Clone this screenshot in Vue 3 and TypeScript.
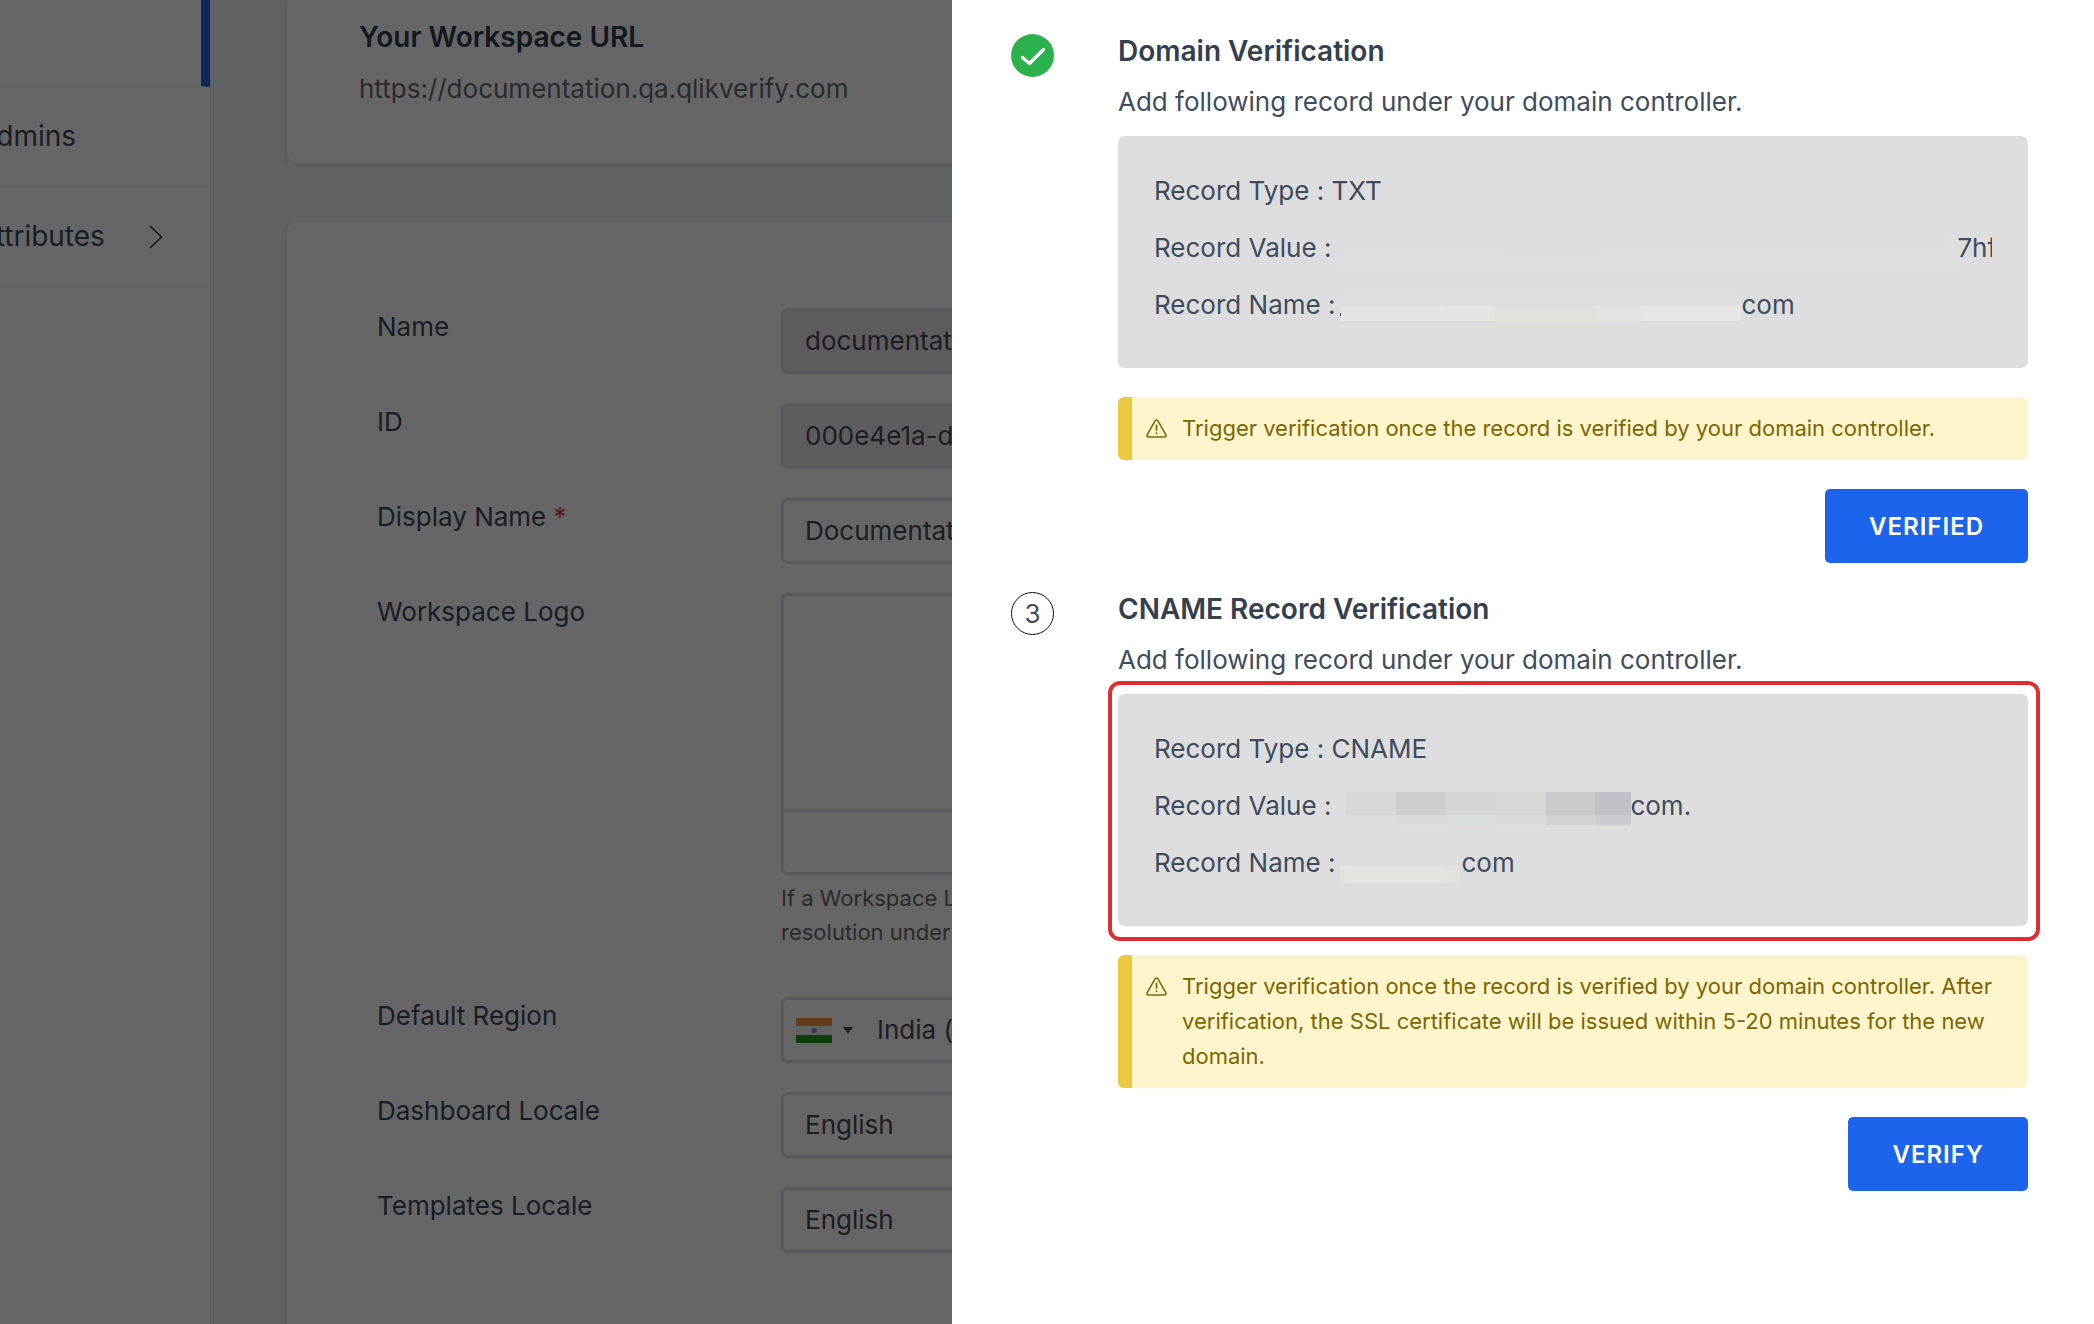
<script setup lang="ts">
import { ref } from 'vue'

interface Cell { x: number; y: number; w: number; h: number; fill: string }
interface Mask { width: number; cells: Cell[] }
interface RecordRow { label: string; mask?: Mask; text: string }
interface Step {
  id: string
  number: number
  done: boolean
  title: string
  rows: RecordRow[]
  notice: string
  action: string
}

const displayName = ref('Documentation')
const region = ref('India (')
const dashboardLocale = ref('English')
const templatesLocale = ref('English')

// Masks hide the private part of a DNS record; cells are relative to the row's label end.
const txtValueMask: Mask = {
  width: 626,
  cells: [
    { x: 6, y: 27, w: 170, h: 16, fill: '#dfdfdf' },
    { x: 176, y: 27, w: 90, h: 16, fill: '#dedfdc' },
    { x: 266, y: 27, w: 346, h: 16, fill: '#dfdfdf' },
    { x: 612, y: 8, w: 14, h: 35, fill: '#dfdfdf' },
  ],
}
const txtNameMask: Mask = {
  width: 406,
  cells: [
    { x: 5, y: 28, w: 1, h: 3, fill: '#3f4c5e' },
    { x: 6, y: 8, w: 400, h: 13, fill: '#dedede' },
    { x: 6, y: 21, w: 104, h: 15, fill: '#e5e5e4' },
    { x: 110, y: 21, w: 50, h: 15, fill: '#e4e4e1' },
    { x: 160, y: 21, w: 99, h: 15, fill: '#e0e2db' },
    { x: 259, y: 21, w: 50, h: 15, fill: '#e4e3df' },
    { x: 309, y: 21, w: 97, h: 15, fill: '#e6e6e5' },
  ],
}
const cnameValueMask: Mask = {
  width: 299,
  cells: [
    { x: 15, y: 6, w: 50, h: 23, fill: '#d5d7da' },
    { x: 65, y: 6, w: 50, h: 23, fill: '#cdced1' },
    { x: 115, y: 6, w: 50, h: 23, fill: '#d4d6d9' },
    { x: 165, y: 6, w: 50, h: 23, fill: '#d6d7d7' },
    { x: 215, y: 6, w: 49, h: 23, fill: '#c9cacc' },
    { x: 264, y: 6, w: 36, h: 23, fill: '#c1c2c7' },
    { x: 65, y: 29, w: 50, h: 10, fill: '#dbdbdb' },
    { x: 115, y: 29, w: 50, h: 10, fill: '#dadddd' },
    { x: 165, y: 29, w: 50, h: 10, fill: '#d9dcdb' },
    { x: 215, y: 29, w: 49, h: 10, fill: '#d2d2d2' },
    { x: 264, y: 29, w: 36, h: 10, fill: '#cbccd0' },
  ],
}
const cnameNameMask: Mask = {
  width: 126,
  cells: [
    { x: 5, y: 23, w: 5, h: 17, fill: '#e3e3de' },
    { x: 10, y: 23, w: 100, h: 17, fill: '#e5e5e0' },
    { x: 110, y: 23, w: 15, h: 17, fill: '#e3e2de' },
  ],
}

const steps: Step[] = [
  {
    id: 'txt',
    number: 2,
    done: true,
    title: 'Domain Verification',
    rows: [
      { label: 'Record Type :', text: 'TXT' },
      { label: 'Record Value :', mask: txtValueMask, text: '7hf' },
      { label: 'Record Name :', mask: txtNameMask, text: 'com' },
    ],
    notice: 'Trigger verification once the record is verified by your domain controller.',
    action: 'VERIFIED',
  },
  {
    id: 'cname',
    number: 3,
    done: false,
    title: 'CNAME Record Verification',
    rows: [
      { label: 'Record Type :', text: 'CNAME' },
      { label: 'Record Value :', mask: cnameValueMask, text: 'com.' },
      { label: 'Record Name :', mask: cnameNameMask, text: 'com' },
    ],
    notice:
      'Trigger verification once the record is verified by your domain controller. After verification, the SSL certificate will be issued within 5-20 minutes for the new domain.',
    action: 'VERIFY',
  },
]
</script>

<template>
  <div class="page">
    <nav class="sidebar">
      <a class="nav-item active" href="#"></a>
      <a class="nav-item" href="#">Admins</a>
      <a class="nav-item" href="#">
        Attributes
        <svg class="chevron" viewBox="0 0 14 24" aria-hidden="true">
          <path d="M1 1 L12.500 12 L1 23" fill="none" stroke="#3a3d4d" stroke-width="1.600" />
        </svg>
      </a>
    </nav>

    <main class="content">
      <section class="card url-card">
        <h2>Your Workspace URL</h2>
        <p>https://documentation.qa.qlikverify.com</p>
      </section>

      <form class="card form-card" @submit.prevent>
        <div class="field">
          <label for="name">Name</label>
          <input id="name" class="control" value="documentation" disabled />
        </div>
        <div class="field">
          <label for="id">ID</label>
          <input id="id" class="control" value="000e4e1a-d" disabled />
        </div>
        <div class="field">
          <label for="display">Display Name <span class="required">*</span></label>
          <input id="display" v-model="displayName" class="control" />
        </div>
        <div class="field logo-field">
          <span class="label">Workspace Logo</span>
          <div>
            <div class="logo-box">
              <div class="logo-preview"></div>
              <div class="logo-actions"></div>
            </div>
            <p class="hint">If a Workspace L<br />resolution under</p>
          </div>
        </div>
        <div class="field">
          <label for="region">Default Region</label>
          <div class="control region">
            <button class="flag-button" type="button" aria-label="Choose region">
              <svg class="flag" viewBox="0 0 36 25" aria-hidden="true">
                <rect width="36" height="25" fill="#f4f4f4" />
                <rect width="36" height="8" fill="#ff9a42" />
                <rect y="17" width="36" height="8" fill="#289a20" />
                <circle cx="18" cy="12.500" r="3" fill="#a9a6d8" />
                <circle cx="18" cy="12.500" r="1.500" fill="#7d78c4" />
              </svg>
              <svg class="caret" viewBox="0 0 10 7" aria-hidden="true">
                <path d="M0 0H10L5 7Z" fill="#555" />
              </svg>
            </button>
            <input id="region" v-model="region" />
          </div>
        </div>
        <div class="field">
          <label for="dashboard">Dashboard Locale</label>
          <select id="dashboard" v-model="dashboardLocale" class="control">
            <option>English</option>
          </select>
        </div>
        <div class="field">
          <label for="templates">Templates Locale</label>
          <select id="templates" v-model="templatesLocale" class="control">
            <option>English</option>
          </select>
        </div>
      </form>
    </main>

    <div class="overlay">
      <div class="scrim"></div>
      <aside class="drawer">
        <section v-for="step in steps" :key="step.id" class="step">
          <svg v-if="step.done" class="marker" viewBox="0 0 43 43" aria-label="Done">
            <circle cx="21.500" cy="21.500" r="21.500" fill="#2bb24c" />
            <path d="M11.500 23.500 L18.500 29.500 L32.500 15.500" fill="none" stroke="#fff" stroke-width="3.200" stroke-linecap="round" stroke-linejoin="round" />
          </svg>
          <span v-else class="marker number">{{ step.number }}</span>
          <div class="step-body">
            <h3>{{ step.title }}</h3>
            <p class="lead">Add following record under your domain controller.</p>
            <div class="record" :class="{ highlighted: !step.done }">
              <div class="rows">
                <div v-for="row in step.rows" :key="row.label" class="row">
                  <span>{{ row.label }}</span>
                  <svg v-if="row.mask" class="mask" :width="row.mask.width" height="39" aria-hidden="true">
                    <rect v-for="(c, i) in row.mask.cells" :key="i" :x="c.x" :y="c.y" :width="c.w" :height="c.h" :fill="c.fill" />
                  </svg>
                  <span v-else>&nbsp;</span>
                  <span>{{ row.text }}</span>
                </div>
              </div>
            </div>
            <div class="notice">
              <svg class="warn" viewBox="0 0 21 19" fill="none" stroke="#7d6a0c" stroke-linecap="round" stroke-linejoin="round" aria-hidden="true">
                <path d="M9.200 1.700 L1.200 15.600 Q0.400 17.800 2.600 18 H18.400 Q20.600 17.800 19.800 15.600 L11.800 1.700 Q10.500 0.200 9.200 1.700 Z" stroke-width="1.600" />
                <path d="M10.500 6.500 V11 M10.500 14.200 V14.400" stroke-width="1.800" />
              </svg>
              <p>{{ step.notice }}</p>
            </div>
            <button class="action" type="button">{{ step.action }}</button>
          </div>
        </section>
      </aside>
    </div>
  </div>
</template>

<style>
body {
  margin: 0;
  overflow: hidden;
}
</style>

<style scoped>
* {
  box-sizing: border-box;
}
.page {
  display: flex;
  height: 100vh;
  overflow: hidden;
  background: #f3f6fb;
  font-family: Inter, "Liberation Sans", sans-serif;
  font-size: 26px;
  line-height: 39px;
  color: #3f4c5e;
}
h2, h3, p {
  margin: 0;
}
.sidebar {
  flex: none;
  width: 261px;
  margin-left: -50px;
  background: #fff;
  border-right: 1px solid #e6e6e9;
}
.nav-item {
  display: flex;
  align-items: center;
  justify-content: space-between;
  height: 100px;
  padding: 0 47px 0 27px;
  border-bottom: 1px solid #f4f4f4;
  font-size: 28px;
  color: inherit;
  text-decoration: none;
}
.nav-item.active {
  height: 87px;
  border-right: 9px solid #1c64ec;
}
.chevron {
  width: 14px;
  height: 24px;
}
.content {
  flex: 1;
  display: flex;
  flex-direction: column;
  gap: 59px;
  padding: 0 76px;
}
.card {
  background: #fff;
  box-shadow: 0 2px 10px rgba(60, 60, 90, 0.12);
}
.url-card {
  padding: 16px 72px 55px;
  border-radius: 0 0 10px 10px;
}
.url-card h2 {
  margin-bottom: 11px;
  font-size: 28px;
  line-height: 42px;
  font-weight: 600;
  color: #33404f;
}
.url-card p {
  color: #696d74;
}
.form-card {
  flex: 1;
  display: flex;
  flex-direction: column;
  gap: 29px;
  padding: 86px 90px;
  border-radius: 10px 10px 0 0;
}
.field {
  display: grid;
  grid-template-columns: 404px 1fr;
  align-items: start;
  line-height: 37px;
}
.required {
  color: #e53935;
}
.control {
  width: 100%;
  height: 66px;
  padding: 0 21px 2px;
  border: 3px solid #e2e2ea;
  border-radius: 6px;
  background: #fff;
  font: inherit;
  color: #4c4c50;
  outline: none;
  appearance: none;
}
.control:disabled {
  background: #e9e9ee;
}
.region {
  display: flex;
  align-items: center;
  padding: 0 12px;
}
.region input {
  flex: 1;
  min-width: 0;
  padding: 0 0 2px;
  border: 0;
  background: none;
  font: inherit;
  color: inherit;
}
.flag-button {
  display: flex;
  align-items: center;
  gap: 11px;
  margin-right: 24px;
  padding: 0;
  border: 0;
  background: none;
}
.flag {
  width: 36px;
  height: 25px;
}
.caret {
  width: 10px;
  height: 7px;
}
.logo-field {
  padding-bottom: 19px;
}
.logo-box {
  border: 3px solid #e2e2ea;
  border-radius: 6px;
}
.logo-preview {
  height: 216px;
  border-bottom: 3px solid #e2e2ea;
}
.logo-actions {
  height: 60px;
}
.hint {
  margin-top: 6px;
  font-size: 22px;
  line-height: 34px;
  color: #6c6c6c;
}
.overlay {
  position: fixed;
  inset: 0;
  display: grid;
  grid-template-columns: 952px 1fr;
}
.scrim {
  background: rgba(0, 0, 0, 0.6);
}
.drawer {
  display: flex;
  flex-direction: column;
  gap: 29px;
  padding: 34px 66px 34px 59px;
  background: #fff;
  overflow: hidden;
}
.step {
  display: flex;
  gap: 64px;
}
.marker {
  flex: none;
  width: 43px;
  height: 43px;
}
.number {
  display: grid;
  place-items: center;
  border: 1px solid #111;
  border-radius: 50%;
}
.step-body {
  flex: 1;
  min-width: 0;
  display: flex;
  flex-direction: column;
}
.step h3 {
  margin-bottom: 14px;
  font-size: 28px;
  line-height: 34px;
  font-weight: 600;
  color: #33404f;
}
.lead {
  margin-bottom: 15px;
}
.record {
  position: relative;
  padding: 35px 36px 44px;
  border-radius: 7px;
  background: #ddd;
}
.highlighted::after {
  content: "";
  position: absolute;
  inset: -13px -12px -15px -10px;
  border: 4px solid #dd2e31;
  border-radius: 12px;
}
.rows {
  display: flex;
  flex-direction: column;
  gap: 18px;
  overflow-x: clip;
}
.row {
  display: flex;
  white-space: nowrap;
}
.row > * {
  flex: none;
}
.mask {
  overflow: visible;
}
.notice {
  display: flex;
  gap: 15px;
  margin-top: 29px;
  padding: 14px 30px 14px 14px;
  border-left: 14px solid #ebca41;
  border-radius: 6px;
  background: #fff5cc;
  font-size: 22px;
  line-height: 35px;
  color: #7a6700;
}
.warn {
  flex: none;
  width: 21px;
  height: 19px;
  margin-top: 8px;
}
.action {
  align-self: flex-end;
  height: 74px;
  margin-top: 29px;
  padding: 0 44px;
  border: 0;
  border-radius: 5px;
  background: #1c64ec;
  font: inherit;
  font-size: 24px;
  font-weight: 600;
  letter-spacing: 1px;
  color: #fff;
}
</style>
